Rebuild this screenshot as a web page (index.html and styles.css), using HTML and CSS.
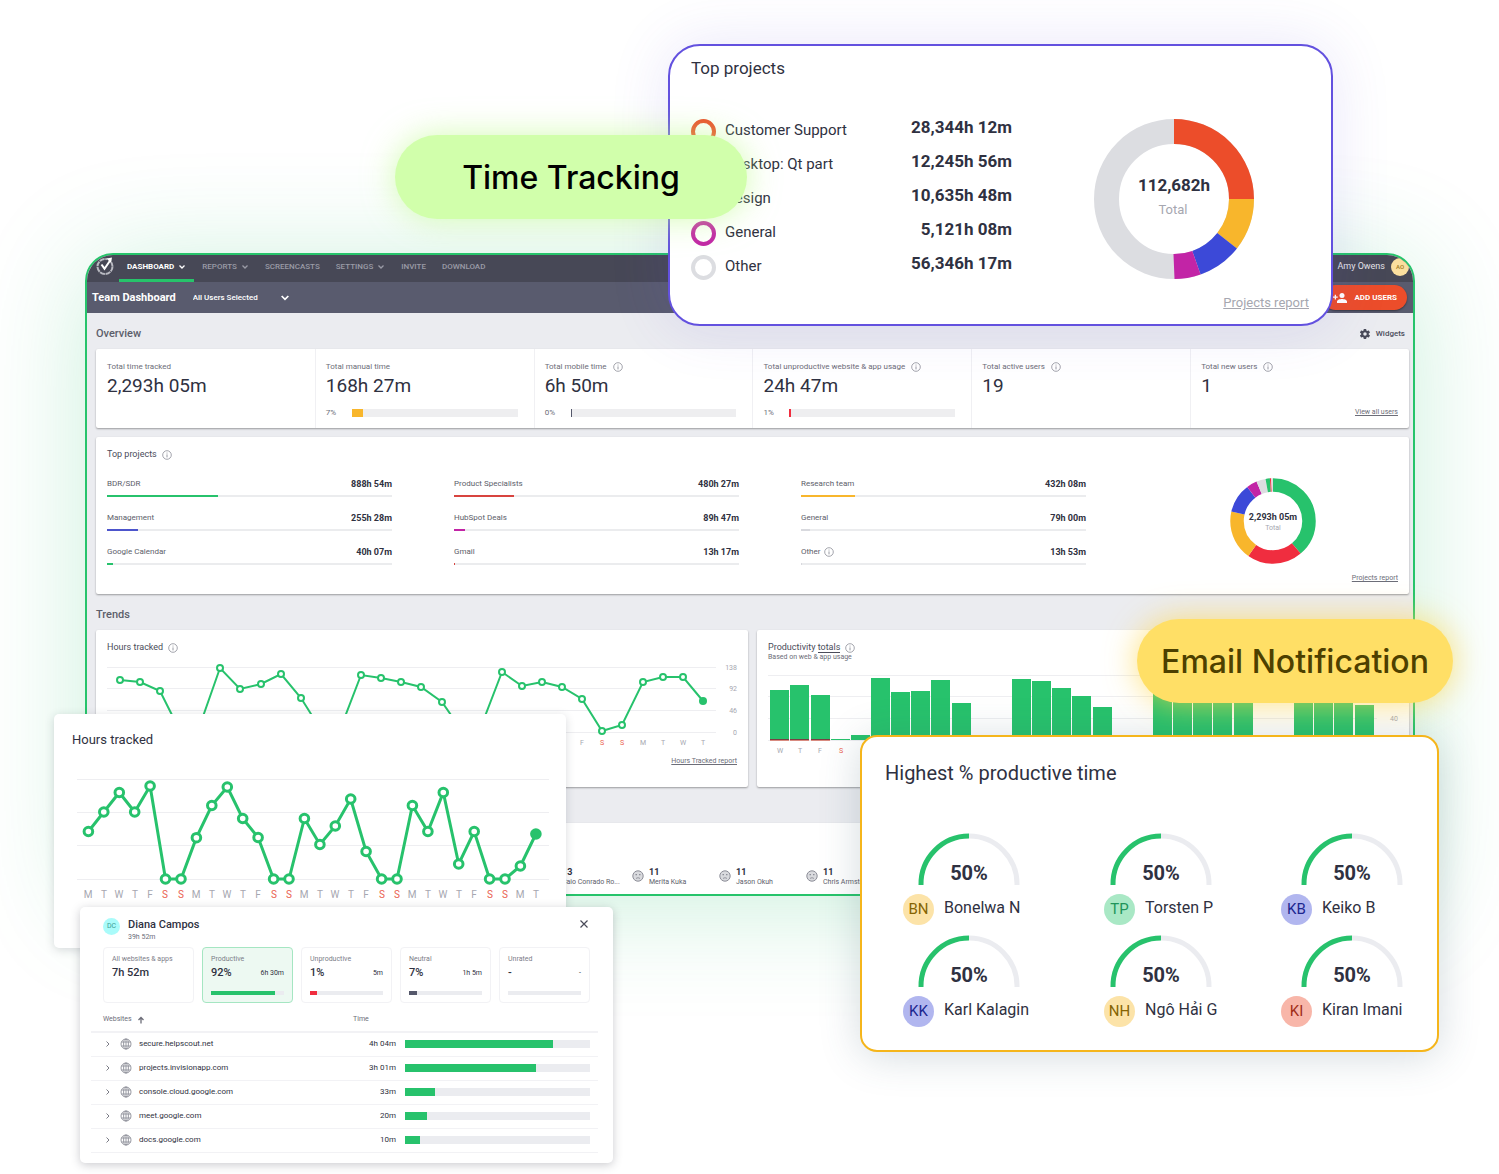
FILE: index.html
```html
<!DOCTYPE html>
<html lang="en">
<head>
<meta charset="utf-8">
<meta name="viewport" content="width=device-width, initial-scale=1">
<title>Team Dashboard</title>
<link rel="stylesheet" href="styles.css">
</head>
<body>
<svg class="defs" width="0" height="0" aria-hidden="true">
  <defs>
    <marker id="dot" viewBox="0 0 10 10" refX="5" refY="5" markerWidth="10" markerHeight="10" markerUnits="userSpaceOnUse"><circle cx="5" cy="5" r="3" fill="#fff" stroke="#27c26c" stroke-width="2"/></marker>
    <marker id="dot-end" viewBox="0 0 10 10" refX="5" refY="5" markerWidth="10" markerHeight="10" markerUnits="userSpaceOnUse"><circle cx="5" cy="5" r="4" fill="#27c26c"/></marker>
    <marker id="ring" viewBox="0 0 14 14" refX="7" refY="7" markerWidth="14" markerHeight="14" markerUnits="userSpaceOnUse"><circle cx="7" cy="7" r="4.3" fill="#fff" stroke="#27c26c" stroke-width="3"/></marker>
    <marker id="ring-end" viewBox="0 0 14 14" refX="7" refY="7" markerWidth="14" markerHeight="14" markerUnits="userSpaceOnUse"><circle cx="7" cy="7" r="5.8" fill="#27c26c"/></marker>
    <symbol id="info" viewBox="0 0 10 10"><circle cx="5" cy="5" r="4.3" fill="none" stroke="currentColor" stroke-width=".8"/><path d="M5 4.4v3M5 2.6v.9" stroke="currentColor" stroke-width=".9"/></symbol>
    <symbol id="chevron" viewBox="0 0 8 6"><path d="M1.5 1.5 4 4l2.500-2.500" fill="none" stroke="currentColor" stroke-width="1.300"/></symbol>
    <symbol id="right" viewBox="0 0 6 8"><path d="M1.500 1.500 4 4 1.500 6.500" fill="none" stroke="currentColor" stroke-width=".9"/></symbol>
    <symbol id="globe" viewBox="0 0 12 12"><g fill="none" stroke="currentColor" stroke-width=".9"><circle cx="6" cy="6" r="5"/><ellipse cx="6" cy="6" rx="2.400" ry="5"/><path d="M1.500 4h9M1.500 8h9M6 1v10"/></g></symbol>
    <symbol id="face" viewBox="0 0 12 12"><circle cx="6" cy="6" r="5.200" fill="#d9dade" stroke="currentColor"/><path d="M3.500 4.600h1.500M7 4.600h1.500" stroke="currentColor" stroke-width="1.200"/><path d="M4 8.400q2-1.400 4 0" fill="none" stroke="currentColor" stroke-width=".9"/></symbol>
  </defs>
</svg>

<div class="stage">
  <section class="dashboard">
    <header class="nav">
      <svg class="logo" viewBox="0 0 20 20" aria-hidden="true"><circle cx="10" cy="10.500" r="7.500" fill="none" stroke="#b9bac2" stroke-width="2" stroke-dasharray="5.200 .7"/><path d="M9.500 11 16 2.500" fill="none" stroke="#474856" stroke-width="5"/><path d="M6.500 8.500l3 4.200L15.500 4" fill="none" stroke="#fff" stroke-width="2"/><path d="M11.500 2.500l5.500-1-1 5.500z" fill="#fff"/></svg>
      <nav class="menu">
        <a class="menu-item active" href="#">DASHBOARD <svg class="chev"><use href="#chevron"/></svg></a>
        <a class="menu-item" href="#">REPORTS <svg class="chev"><use href="#chevron"/></svg></a>
        <a class="menu-item" href="#">SCREENCASTS</a>
        <a class="menu-item" href="#">SETTINGS <svg class="chev"><use href="#chevron"/></svg></a>
        <a class="menu-item" href="#">INVITE</a>
        <a class="menu-item" href="#">DOWNLOAD</a>
      </nav>
      <div class="account"><span class="user">Amy Owens</span><span class="user-avatar">AO</span></div>
    </header>
    <div class="subnav">
      <h1 class="page-title">Team Dashboard</h1>
      <label class="picker"><select class="picker-select" aria-label="Users"><option>All Users Selected</option></select><svg class="picker-chev"><use href="#chevron"/></svg></label>
      <button class="add-users" type="button"><svg class="add-icon" viewBox="0 0 14 12" aria-hidden="true"><g fill="#fff"><circle cx="9" cy="3.500" r="2.500"/><path d="M4 11V9.600C4 7.800 7 7 9 7s5 .8 5 2.600V11zM0 4.500h1.700V2.800H3v1.700h1.700v1.300H3v1.700H1.700V5.800H0z"/></g></svg>ADD USERS</button>
    </div>

    <main class="content">
      <div class="section-head">
        <h2 class="section-title">Overview</h2>
        <button class="widgets" type="button"><svg class="gear" viewBox="0 0 24 24" aria-hidden="true"><path fill="currentColor" d="M19.4 13a7.500 7.500 0 0 0 0-2l2.200-1.700c.2-.2.2-.4.1-.6l-2-3.500c-.1-.2-.4-.3-.6-.2l-2.600 1a7.600 7.600 0 0 0-1.700-1L14.400 2.400c0-.2-.2-.4-.5-.4h-4c-.3 0-.5.2-.5.4L9 5a7.600 7.600 0 0 0-1.700 1L4.700 5c-.2-.1-.5 0-.6.2l-2 3.500c-.1.200-.1.500.1.600L4.400 11a7.500 7.500 0 0 0 0 2l-2.200 1.700c-.2.200-.2.400-.1.600l2 3.500c.1.200.4.300.6.200l2.600-1c.5.400 1.100.8 1.700 1l.4 2.600c0 .2.200.4.500.4h4c.3 0 .5-.2.500-.4l.4-2.600c.6-.2 1.200-.6 1.700-1l2.600 1c.2.100.5 0 .6-.2l2-3.500c.1-.2.1-.5-.1-.6zM12 15.500a3.500 3.500 0 1 1 0-7 3.500 3.500 0 0 1 0 7z"/></svg>Widgets</button>
      </div>

      <div class="card stats">
        <div class="stat"><span class="stat-label">Total time tracked</span><span class="stat-value">2,293h 05m</span></div>
        <div class="stat"><span class="stat-label">Total manual time</span><span class="stat-value">168h 27m</span><div class="stat-progress"><span>7%</span><div class="track"><div class="fill yellow" style="width:7%"></div></div></div></div>
        <div class="stat"><span class="stat-label">Total mobile time <svg class="info"><use href="#info"/></svg></span><span class="stat-value">6h 50m</span><div class="stat-progress"><span>0%</span><div class="track"><div class="fill slate" style="width:1px"></div></div></div></div>
        <div class="stat"><span class="stat-label">Total unproductive website &amp; app usage <svg class="info"><use href="#info"/></svg></span><span class="stat-value">24h 47m</span><div class="stat-progress"><span>1%</span><div class="track"><div class="fill red" style="width:1%"></div></div></div></div>
        <div class="stat"><span class="stat-label">Total active users <svg class="info"><use href="#info"/></svg></span><span class="stat-value">19</span></div>
        <div class="stat"><span class="stat-label">Total new users <svg class="info"><use href="#info"/></svg></span><span class="stat-value">1</span><a class="small-link" href="#">View all users</a></div>
      </div>

      <div class="card projects">
        <div class="projects-main">
          <h3 class="card-title">Top projects <svg class="info"><use href="#info"/></svg></h3>
          <div class="project-grid">
            <div class="project"><span>BDR/SDR</span><b>888h 54m</b><div class="line"><div class="fill green" style="width:39%"></div></div></div>
            <div class="project"><span>Product Specialists</span><b>480h 27m</b><div class="line"><div class="fill brick" style="width:21%"></div></div></div>
            <div class="project"><span>Research team</span><b>432h 08m</b><div class="line"><div class="fill yellow" style="width:19%"></div></div></div>
            <div class="project"><span>Management</span><b>255h 28m</b><div class="line"><div class="fill blue" style="width:11%"></div></div></div>
            <div class="project"><span>HubSpot Deals</span><b>89h 47m</b><div class="line"><div class="fill purple" style="width:4%"></div></div></div>
            <div class="project"><span>General</span><b>79h 00m</b><div class="line"><div class="fill gray" style="width:3%"></div></div></div>
            <div class="project"><span>Google Calendar</span><b>40h 07m</b><div class="line"><div class="fill green" style="width:2%"></div></div></div>
            <div class="project"><span>Gmail</span><b>13h 17m</b><div class="line"><div class="fill brick" style="width:1px"></div></div></div>
            <div class="project"><span>Other <svg class="info"><use href="#info"/></svg></span><b>13h 53m</b><div class="line"><div class="fill gray" style="width:1px"></div></div></div>
          </div>
        </div>
        <div class="projects-side">
          <svg class="donut-small" viewBox="0 0 86 86" role="img" aria-label="Total 2,293h 05m">
            <g transform="rotate(-90 43 43)" fill="none" stroke-width="13.500">
              <circle cx="43" cy="43" r="36" pathLength="100" stroke="#27c26c" stroke-dasharray="38.800 61.200"/>
              <circle cx="43" cy="43" r="36" pathLength="100" stroke="#f02d3f" stroke-dasharray="21 79" stroke-dashoffset="-38.800"/>
              <circle cx="43" cy="43" r="36" pathLength="100" stroke="#f8b62c" stroke-dasharray="18.800 81.200" stroke-dashoffset="-59.800"/>
              <circle cx="43" cy="43" r="36" pathLength="100" stroke="#3c49d8" stroke-dasharray="11.100 88.900" stroke-dashoffset="-78.600"/>
              <circle cx="43" cy="43" r="36" pathLength="100" stroke="#c224a6" stroke-dasharray="4 96" stroke-dashoffset="-89.700"/>
              <circle cx="43" cy="43" r="36" pathLength="100" stroke="#dcdde1" stroke-dasharray="3.500 96.500" stroke-dashoffset="-93.700"/>
              <circle cx="43" cy="43" r="36" pathLength="100" stroke="#27c26c" stroke-dasharray="1.600 98.400" stroke-dashoffset="-97.200"/>
              <circle cx="43" cy="43" r="36" pathLength="100" stroke="#f02d3f" stroke-dasharray=".5 99.500" stroke-dashoffset="-98.800"/>
              <circle cx="43" cy="43" r="36" pathLength="100" stroke="#dcdde1" stroke-dasharray=".6 99.400" stroke-dashoffset="-99.400"/>
            </g>
            <text class="donut-small-value" x="43" y="42">2,293h 05m</text>
            <text class="donut-small-label" x="43" y="52">Total</text>
          </svg>
          <a class="small-link" href="#">Projects report</a>
        </div>
      </div>

      <div class="section-head"><h2 class="section-title">Trends</h2></div>

      <div class="trends">
        <div class="card trend">
          <h3 class="card-title">Hours tracked <svg class="info"><use href="#info"/></svg></h3>
          <svg class="chart" viewBox="0 0 630 90" role="img" aria-label="Hours tracked by day">
            <path class="grid" d="M0 7.500H609M0 28.500H609M0 50.500H609M0 72.500H609"/>
            <polyline class="trend-line" points="13,20 33,22 53,31 73,71 93,65 113,8 133,29 154,24 174,14 194,38 214,70 234,67 254,15 274,18 294,22 314,27 335,42 355,71 375,64 395,12 415,26 435,22 455,27 475,39 495,71 515,65 536,22 556,17 576,17 596,41"/>
            <g class="axis end"><text x="630" y="10">138</text><text x="630" y="31">92</text><text x="630" y="53">46</text><text x="630" y="75">0</text></g>
            <g class="axis"><text x="475" y="85">F</text><text class="off" x="495" y="85">S</text><text class="off" x="515" y="85">S</text><text x="536" y="85">M</text><text x="556" y="85">T</text><text x="576" y="85">W</text><text x="596" y="85">T</text></g>
          </svg>
          <a class="small-link" href="#">Hours Tracked report</a>
        </div>
        <div class="card trend">
          <h3 class="card-title"><span>Productivity <a class="totals" href="#">totals</a></span><svg class="info"><use href="#info"/></svg></h3>
          <span class="note">Based on web &amp; app usage</span>
          <svg class="chart" viewBox="0 0 630 90" role="img" aria-label="Productivity by day">
            <path class="grid" d="M0 8.500H609M0 29.500H609M0 51.500H609M0 73.500H609"/>
            <path fill="#27c26c" d="M2 23h19v50H2zM22 18h19v55H22zM43 28h19v45H43zM63 72h19v1H63zM83 68h19v5H83zM103 11h19v62h-19zM123 25h19v48h-19zM143 24h19v49h-19zM163 13h19v60h-19zM184 36h19v37h-19zM244 12h19v61h-19zM264 14h19v59h-19zM284 21h19v52h-19zM304 29h19v44h-19zM325 40h19v33h-19zM385 18h19v55h-19zM405 18h19v55h-19zM425 20h19v53h-19zM445 24h19v49h-19zM466 30h19v43h-19zM526 18h19v55h-19zM546 18h19v55h-19zM566 22h19v51h-19zM587 38h19v35h-19z"/>
            <path fill="#7a3f43" d="M2 72h19v1H2zM22 72h19v1H22zM43 72h19v1H43z"/>
            <path fill="#d98b80" d="M2 73h19v1H2zM22 73h19v1H22zM43 73h19v1H43z"/>
            <g class="axis"><text x="12" y="86">W</text><text x="32" y="86">T</text><text x="52" y="86">F</text><text class="off" x="73" y="86">S</text><text x="626" y="54">40</text></g>
          </svg>
        </div>
      </div>

      <div class="card people-strip">
        <div class="mood"><svg class="face"><use href="#face"/></svg><div><b>13</b><span>Caio Conrado Ro...</span></div></div>
        <div class="mood"><svg class="face"><use href="#face"/></svg><div><b>11</b><span>Merita Kuka</span></div></div>
        <div class="mood"><svg class="face"><use href="#face"/></svg><div><b>11</b><span>Jason Okuh</span></div></div>
        <div class="mood"><svg class="face"><use href="#face"/></svg><div><b>11</b><span>Chris Armstrong</span></div></div>
      </div>
    </main>
  </section>

  <section class="float top-projects">
    <div class="tp-list">
      <h2 class="tp-title">Top projects</h2>
      <div class="tp-row"><i class="ring orange-ring"></i><span>Customer Support</span><b>28,344h 12m</b></div>
      <div class="tp-row"><i class="ring yellow-ring"></i><span>Desktop: Qt part</span><b>12,245h 56m</b></div>
      <div class="tp-row"><i class="ring blue-ring"></i><span>Design</span><b>10,635h 48m</b></div>
      <div class="tp-row"><i class="ring purple-ring"></i><span>General</span><b>5,121h 08m</b></div>
      <div class="tp-row"><i class="ring gray-ring"></i><span>Other</span><b>56,346h 17m</b></div>
    </div>
    <div class="tp-side">
      <svg class="donut" viewBox="0 0 160 160" role="img" aria-label="Total 112,682h">
        <g transform="rotate(-90 80 80)" fill="none" stroke-width="25">
          <circle cx="80" cy="80" r="67.500" pathLength="100" stroke="#dcdde1"/>
          <circle cx="80" cy="80" r="67.500" pathLength="100" stroke="#ec4d2a" stroke-dasharray="25 75"/>
          <circle cx="80" cy="80" r="67.500" pathLength="100" stroke="#f8b62c" stroke-dasharray="10.600 89.400" stroke-dashoffset="-25"/>
          <circle cx="80" cy="80" r="67.500" pathLength="100" stroke="#3c49d8" stroke-dasharray="9 91" stroke-dashoffset="-35.600"/>
          <circle cx="80" cy="80" r="67.500" pathLength="100" stroke="#c224a6" stroke-dasharray="5.400 94.600" stroke-dashoffset="-44.600"/>
        </g>
        <text class="donut-value" x="80" y="72">112,682h</text>
        <text class="donut-label" x="79" y="95">Total</text>
      </svg>
      <a class="tp-link" href="#">Projects report</a>
    </div>
  </section>

  <section class="float hours">
    <h2 class="hours-title">Hours tracked</h2>
    <svg class="hours-chart" viewBox="0 0 472 132" role="img" aria-label="Hours tracked by day">
      <path class="grid" d="M0 9.500H472M0 42.500H472M0 75.500H472M0 109.500H472"/>
      <polyline class="hours-line" points="11.400,61.500 26.800,42 42.300,22.500 57.700,42 73.100,16 88.500,109 104,109 119.400,67.700 134.800,35.500 150.300,17 165.700,48.500 181.100,67.500 196.600,109 212,109 227.400,48.500 242.900,74.500 258.300,56 273.700,29 289.100,81.500 304.600,109 320,109 335.400,35.500 350.900,61.500 366.300,22.500 381.700,94 397.200,61.500 412.600,109 428,109 443.400,96 458.900,64"/>
      <g class="days"><text x="11" y="128">M</text><text x="27" y="128">T</text><text x="42" y="128">W</text><text x="58" y="128">T</text><text x="73" y="128">F</text><text class="off" x="88" y="128">S</text><text class="off" x="104" y="128">S</text><text x="119" y="128">M</text><text x="135" y="128">T</text><text x="150" y="128">W</text><text x="166" y="128">T</text><text x="181" y="128">F</text><text class="off" x="197" y="128">S</text><text class="off" x="212" y="128">S</text><text x="227" y="128">M</text><text x="243" y="128">T</text><text x="258" y="128">W</text><text x="274" y="128">T</text><text x="289" y="128">F</text><text class="off" x="305" y="128">S</text><text class="off" x="320" y="128">S</text><text x="335" y="128">M</text><text x="351" y="128">T</text><text x="366" y="128">W</text><text x="382" y="128">T</text><text x="397" y="128">F</text><text class="off" x="413" y="128">S</text><text class="off" x="428" y="128">S</text><text x="443" y="128">M</text><text x="459" y="128">T</text></g>
    </svg>
  </section>

  <section class="float diana">
    <header class="diana-head">
      <span class="diana-avatar">DC</span>
      <div class="diana-who"><h2>Diana Campos</h2><span>39h 52m</span></div>
      <button class="close" type="button" aria-label="Close"><svg viewBox="0 0 10 10" width="10" height="10"><path d="M1.500 1.500l7 7M8.500 1.500l-7 7" stroke="#4a4b59" stroke-width="1.200"/></svg></button>
    </header>
    <div class="tiles">
      <div class="tile"><span class="tile-label">All websites &amp; apps</span><div class="tile-row"><b>7h 52m</b></div></div>
      <div class="tile selected"><span class="tile-label">Productive</span><div class="tile-row"><b>92%</b><span>6h 30m</span></div><div class="tile-track"><div class="fill green" style="width:87%"></div></div></div>
      <div class="tile"><span class="tile-label">Unproductive</span><div class="tile-row"><b>1%</b><span>5m</span></div><div class="tile-track"><div class="fill red" style="width:9%"></div></div></div>
      <div class="tile"><span class="tile-label">Neutral</span><div class="tile-row"><b>7%</b><span>1h 5m</span></div><div class="tile-track"><div class="fill slate" style="width:11%"></div></div></div>
      <div class="tile"><span class="tile-label">Unrated</span><div class="tile-row"><b>-</b><span>-</span></div><div class="tile-track"></div></div>
    </div>
    <table class="sites">
      <thead><tr><th class="col-site" scope="col"><button class="sort" type="button">Websites <svg viewBox="0 0 8 8" width="8" height="8" aria-hidden="true"><path d="M4 7.500V1.500M1.500 4 4 1.500 6.500 4" fill="none" stroke="currentColor" stroke-width="1.300"/></svg></button></th><th class="col-time" scope="col">Time</th><th class="col-bar"></th></tr></thead>
      <tbody>
        <tr><td><div class="site"><svg class="expand"><use href="#right"/></svg><svg class="globe"><use href="#globe"/></svg>secure.helpscout.net</div></td><td class="time">4h 04m</td><td><div class="bar"><div class="fill green" style="width:80%"></div></div></td></tr>
        <tr><td><div class="site"><svg class="expand"><use href="#right"/></svg><svg class="globe"><use href="#globe"/></svg>projects.invisionapp.com</div></td><td class="time">3h 01m</td><td><div class="bar"><div class="fill green" style="width:71%"></div></div></td></tr>
        <tr><td><div class="site"><svg class="expand"><use href="#right"/></svg><svg class="globe"><use href="#globe"/></svg>console.cloud.google.com</div></td><td class="time">33m</td><td><div class="bar"><div class="fill green" style="width:16%"></div></div></td></tr>
        <tr><td><div class="site"><svg class="expand"><use href="#right"/></svg><svg class="globe"><use href="#globe"/></svg>meet.google.com</div></td><td class="time">20m</td><td><div class="bar"><div class="fill green" style="width:12%"></div></div></td></tr>
        <tr><td><div class="site"><svg class="expand"><use href="#right"/></svg><svg class="globe"><use href="#globe"/></svg>docs.google.com</div></td><td class="time">10m</td><td><div class="bar"><div class="fill green" style="width:8%"></div></div></td></tr>
      </tbody>
    </table>
  </section>

  <section class="float highest">
    <h2 class="highest-title">Highest % productive time</h2>
    <div class="gauges">
      <svg class="gauge" viewBox="0 0 102 52"><path class="gauge-off" d="M51 3a48 48 0 0 1 48 49"/><path class="gauge-on" d="M3 52A48 48 0 0 1 51 3"/><text x="51" y="47">50%</text></svg>
      <svg class="gauge" viewBox="0 0 102 52"><path class="gauge-off" d="M51 3a48 48 0 0 1 48 49"/><path class="gauge-on" d="M3 52A48 48 0 0 1 51 3"/><text x="51" y="47">50%</text></svg>
      <svg class="gauge" viewBox="0 0 102 52"><path class="gauge-off" d="M51 3a48 48 0 0 1 48 49"/><path class="gauge-on" d="M3 52A48 48 0 0 1 51 3"/><text x="51" y="47">50%</text></svg>
    </div>
    <div class="persons">
      <div class="person"><i class="initials gold">BN</i><span>Bonelwa N</span></div>
      <div class="person"><i class="initials mint">TP</i><span>Torsten P</span></div>
      <div class="person"><i class="initials lilac">KB</i><span>Keiko B</span></div>
    </div>
    <div class="gauges">
      <svg class="gauge" viewBox="0 0 102 52"><path class="gauge-off" d="M51 3a48 48 0 0 1 48 49"/><path class="gauge-on" d="M3 52A48 48 0 0 1 51 3"/><text x="51" y="47">50%</text></svg>
      <svg class="gauge" viewBox="0 0 102 52"><path class="gauge-off" d="M51 3a48 48 0 0 1 48 49"/><path class="gauge-on" d="M3 52A48 48 0 0 1 51 3"/><text x="51" y="47">50%</text></svg>
      <svg class="gauge" viewBox="0 0 102 52"><path class="gauge-off" d="M51 3a48 48 0 0 1 48 49"/><path class="gauge-on" d="M3 52A48 48 0 0 1 51 3"/><text x="51" y="47">50%</text></svg>
    </div>
    <div class="persons">
      <div class="person"><i class="initials lilac">KK</i><span>Karl Kalagin</span></div>
      <div class="person"><i class="initials gold">NH</i><span>Ngô Hải G</span></div>
      <div class="person"><i class="initials coral">KI</i><span>Kiran Imani</span></div>
    </div>
  </section>

  <div class="pill pill-green">Time Tracking</div>
  <div class="pill pill-yellow">Email Notification</div>
</div>
</body>
</html>
```
FILE: styles.css
```css
* { box-sizing: border-box; }
body { margin: 0; background: #fff; color: #2f3141; font-family: Roboto, "Liberation Sans", sans-serif; font-size: 8px; line-height: 1.25; }
h1, h2, h3 { margin: 0; font-weight: 400; }
button { margin: 0; padding: 0; border: 0; background: none; color: inherit; font: inherit; cursor: pointer; }
a { color: inherit; text-decoration: none; }
b { font-weight: 700; }
i { font-style: normal; }
svg { display: block; flex: none; overflow: visible; }
.defs { position: absolute; }

.stage { position: relative; min-height: 1174px; padding: 253px 84px 0 85px; overflow: hidden; }

/* Dashboard window */
.dashboard { border: 2px solid #27c46b; border-radius: 28px 28px 0 0; background: #ebecf0; overflow: hidden; box-shadow: 0 10px 110px rgba(39, 194, 108, .24); }
.nav { display: flex; align-items: center; height: 27px; padding: 0 4px 0 8px; background: #474856; color: #9a9ba6; font-weight: 500; }
.logo { width: 20px; height: 20px; margin-bottom: 6px; }
.menu { display: flex; flex: 1; align-self: stretch; margin-left: 4px; }
.menu-item { display: flex; align-items: center; gap: 4px; padding: 0 8px; border-bottom: 3px solid transparent; }
.menu-item.active { border-color: #27c46b; color: #fff; font-weight: 700; }
.chev { width: 8px; height: 6px; }
.account { display: flex; align-items: center; gap: 6px; margin-bottom: 4px; }
.user { color: #e4e4e8; font-size: 9px; font-weight: 400; }
.user-avatar { display: grid; place-items: center; width: 18px; height: 18px; border-radius: 50%; background: #fbdf9e; color: #a07c1e; font-size: 6px; }
.subnav { display: flex; align-items: center; height: 31px; padding: 0 6px 0 5px; background: #595b6e; color: #fff; }
.page-title { font-size: 11px; font-weight: 700; }
.picker { display: flex; align-items: center; gap: 20px; margin: 0 auto 0 17px; }
.picker-select { appearance: none; border: 0; padding: 0; background: none; color: inherit; font: 500 8px/10px Roboto, sans-serif; }
.picker-chev { width: 12px; height: 8px; }
.add-users { display: flex; align-items: center; gap: 7px; height: 25px; padding: 0 10px; border-radius: 13px; background: #ec4d2a; box-shadow: 0 1px 2px rgba(0, 0, 0, .4); font-size: 8px; font-weight: 700; }
.add-icon { width: 14px; height: 12px; }

.content { padding: 0 4px 0 9px; }
.section-head { display: flex; align-items: center; justify-content: space-between; height: 36px; padding: 5px 4px 0 0; }
.section-title { color: #5c5e6a; font-size: 11px; font-weight: 500; }
.widgets { display: flex; align-items: center; gap: 5px; color: #4a4c5a; font-weight: 500; }
.gear { width: 12px; height: 12px; }
.card { background: #fff; border-radius: 2px; box-shadow: 0 1px 2px rgba(0, 0, 0, .35); }
.info { width: 10px; height: 10px; color: #8d8e98; }
.small-link { align-self: flex-end; color: #6c6d78; font-size: 7px; line-height: 8px; text-decoration: underline; }
.fill { height: 100%; }
.green { background: #27c26c; }
.yellow { background: #f8b62c; }
.red { background: #f02d3f; }
.brick { background: #d8443f; }
.blue { background: #4d55cc; }
.purple { background: #c224a6; }
.gray { background: #d8d9de; }
.slate { background: #55586b; }

.stats { display: grid; grid-template-columns: repeat(6, 1fr); height: 79px; }
.stat { display: flex; flex-direction: column; padding: 13px 11px 0 10px; border-left: 1px solid #f0f0f3; }
.stat:first-child { border-left-color: transparent; }
.stat-label { display: flex; align-items: center; gap: 6px; height: 10px; color: #6c6d78; font-size: 8px; white-space: nowrap; }
.stat-value { font-size: 19px; line-height: 28px; }
.stat-progress { display: grid; grid-template-columns: 26px 1fr; align-items: center; margin-top: 8px; padding-right: 5px; color: #6c6d78; }
.stat .small-link { margin-top: 8px; }
.track { height: 8px; background: #eeeef0; }

.projects { display: flex; min-height: 157px; margin-top: 9px; padding: 12px 11px; }
.projects-main { flex: 0 1 979px; }
.card-title { display: flex; align-items: center; gap: 5px; height: 12px; color: #4a4c5a; font-size: 9px; }
.project-grid { display: grid; grid-template-columns: repeat(3, 1fr); gap: 15px 62px; margin-top: 17px; }
.project { display: grid; grid-template-columns: 1fr auto; align-items: center; row-gap: 5px; height: 19px; color: #5c5e6a; line-height: 12px; }
.project b { color: #2f3141; font-size: 9px; }
.project span { display: flex; align-items: center; gap: 4px; }
.line { grid-column: 1 / -1; height: 2px; background: #ebecee; }
.projects-side { display: flex; flex: 1; flex-direction: column; align-items: center; justify-content: flex-end; gap: 10px; margin-left: 62px; }
.donut-small { width: 86px; height: 86px; }
.donut-small-value { fill: #2f3141; font-size: 9px; font-weight: 700; text-anchor: middle; }
.donut-small-label { fill: #a6a7b0; font-size: 7px; text-anchor: middle; }

.trends { display: grid; grid-template-columns: 1fr 1fr; gap: 9px; }
.trends + .card { margin-top: 36px; }
.trend { display: flex; flex-direction: column; height: 157px; padding: 12px 11px 0; }
.trend .chart { margin-top: 6px; }
.note { color: #6c6d78; font-size: 7px; line-height: 7px; }
.totals { border-bottom: 1px solid #4a4c5a; }
.chart { width: 100%; }
.trend .small-link { margin-top: 7px; }
.grid { stroke: #eeeef1; fill: none; }
.trend-line { fill: none; stroke: #27c26c; stroke-width: 2; marker-start: url(#dot); marker-mid: url(#dot); marker-end: url(#dot-end); }
.axis text { fill: #a6a7b0; font-size: 7px; text-anchor: middle; }
.axis.end text { text-anchor: end; }
.axis .off, .days .off { fill: #ea5f50; }

.people-strip { display: flex; height: 71px; padding: 44px 0 0 449px; }
.mood { display: flex; gap: 5px; flex: none; width: 87px; white-space: nowrap; }
.mood b, .mood span { display: block; }
.mood b { font-size: 9px; line-height: 11px; }
.mood span { color: #5c5e6a; font-size: 7px; line-height: 9px; }
.face { width: 12px; height: 12px; margin-top: 3px; color: #8d8e98; }

/* Floating panels */
.float { position: absolute; background: #fff; }
.top-projects { top: 44px; right: 166px; display: flex; justify-content: space-between; width: 665px; min-height: 282px; padding: 12px 22px 13px 21px; border: 2px solid #6351df; border-radius: 32px; box-shadow: 0 0 60px rgba(99, 81, 223, .14); }
.tp-list { width: 321px; }
.tp-title { height: 20px; margin-bottom: 34px; font-size: 17px; line-height: 20px; }
.tp-row { display: grid; grid-template-columns: 25px 1fr auto; align-items: center; column-gap: 9px; height: 34px; font-size: 15px; line-height: 20px; }
.tp-row span { padding-top: 2px; }
.tp-row b { font-size: 17px; padding-bottom: 4px; }
.ring { width: 25px; height: 25px; margin-top: 4px; border: 4px solid; border-radius: 50%; }
.orange-ring { border-color: #ec4d2a; }
.yellow-ring { border-color: #f8b62c; }
.blue-ring { border-color: #3c49d8; }
.purple-ring { border-color: #c224a6; }
.gray-ring { border-color: #dcdde1; }
.tp-side { display: flex; flex-direction: column; justify-content: space-between; width: 215px; padding-top: 61px; }
.donut { width: 160px; height: 160px; }
.donut-value { fill: #2f3141; font-size: 17px; font-weight: 700; text-anchor: middle; }
.donut-label { fill: #a6a7b0; font-size: 13px; text-anchor: middle; }
.tp-link { align-self: flex-end; color: #a6a7b0; font-size: 13px; line-height: 16px; text-decoration: underline; }

.hours { top: 714px; left: 54px; width: 512px; height: 234px; padding: 18px 18px 0; border-radius: 5px; box-shadow: 0 2px 10px rgba(47, 49, 65, .18); }
.hours-title { margin-bottom: 22px; font-size: 13px; line-height: 16px; }
.hours-chart { width: 472px; margin-left: 5px; }
.hours-line { fill: none; stroke: #27c26c; stroke-width: 3; marker-start: url(#ring); marker-mid: url(#ring); marker-end: url(#ring-end); }
.days text { fill: #a6a7b0; font-size: 10px; text-anchor: middle; }

.diana { top: 907px; left: 80px; width: 533px; padding: 11px 15px 10px 11px; border-radius: 5px; box-shadow: 0 2px 10px rgba(47, 49, 65, .25); }
.diana-head { display: flex; height: 29px; padding: 0 9px 0 12px; }
.diana-avatar { display: grid; place-items: center; width: 17px; height: 17px; border-radius: 50%; background: #aafbfa; color: #3b9d94; font-size: 7px; }
.diana-who { flex: 1; margin-left: 8px; }
.diana-who h2 { font-size: 11px; font-weight: 500; line-height: 14px; }
.diana-who span { display: block; color: #6c6d78; font-size: 7px; line-height: 10px; }
.close { align-self: flex-start; padding-top: 1px; }
.tiles { display: grid; grid-template-columns: repeat(5, 1fr); gap: 8px; padding: 0 8px 0 12px; }
.tile { height: 56px; padding: 7px 8px; border: 1px solid #f2f2f5; border-radius: 4px; }
.tile.selected { border-color: #a5e6c2; background: #edf9f2; }
.tile-label { display: block; color: #7c7d88; font-size: 7px; line-height: 9px; white-space: nowrap; }
.tile-row { display: flex; align-items: center; justify-content: space-between; height: 18px; font-size: 7px; }
.tile-row b { font-size: 11px; font-weight: 500; }
.tile-track { height: 4px; margin-top: 9px; background: #ebecf0; }
.sites { width: 100%; border-collapse: collapse; table-layout: fixed; font-size: 8px; }
.sites th { height: 29px; padding: 5px 0 0; border-bottom: 2px solid #f2f2f5; color: #6c6d78; font-size: 7px; font-weight: 400; text-align: left; }
.sites td { height: 24px; padding: 0; border-bottom: 1px solid #f2f2f5; }
.col-site { width: 262px; }
.col-time { width: 43px; }
.sort { display: flex; align-items: center; gap: 5px; padding-left: 12px; }
.site { display: flex; align-items: center; padding-left: 14px; }
.expand { width: 6px; height: 8px; color: #6c6d78; }
.globe { width: 12px; height: 12px; margin: 0 7px 0 9px; color: #8d8e98; }
.time { text-align: right; }
.bar { height: 8px; margin: 0 8px 0 9px; background: #ebecf0; }

.highest { top: 735px; right: 60px; width: 579px; padding: 23px 34px 13px 41px; border: 2px solid #f5b51b; border-radius: 17px; box-shadow: 0 4px 40px rgba(60, 90, 110, .22); }
.highest-title { height: 26px; margin: 0 0 47px -18px; font-size: 20px; line-height: 26px; }
.gauges { display: flex; justify-content: space-between; padding-left: 15px; }
.gauge { width: 102px; height: 52px; }
.gauge path { fill: none; stroke-width: 5; }
.gauge-on { stroke: #27c26c; }
.gauge-off { stroke: #ebecf0; }
.gauge text { fill: #2f3141; font-size: 20px; font-weight: 700; text-anchor: middle; }
.persons { display: grid; grid-template-columns: 201px 177px 1fr; height: 50px; padding-top: 9px; }
.person { display: flex; gap: 10px; height: 31px; font-size: 16px; line-height: 27px; white-space: nowrap; }
.initials { display: grid; place-items: center; width: 31px; height: 31px; border-radius: 50%; font-size: 15px; }
.gold { background: #fce3a8; color: #866403; }
.mint { background: #a9e8c5; color: #20945a; }
.lilac { background: #b1b6ef; color: #1d268f; }
.coral { background: #f8b6a9; color: #a12e18; }

.pill { position: absolute; display: grid; place-items: center; height: 84px; padding-top: 2px; border-radius: 42px; font: 500 32px/40px Inter, sans-serif; white-space: nowrap; }
.pill-green { top: 135px; right: 752px; width: 352px; background: #d1ffab; color: #000; box-shadow: 0 0 32px rgba(190, 250, 140, .65); }
.pill-yellow { top: 619px; right: 46px; width: 316px; background: #ffdf66; color: #4d4000; box-shadow: 0 0 32px rgba(255, 215, 80, .75); }
```
